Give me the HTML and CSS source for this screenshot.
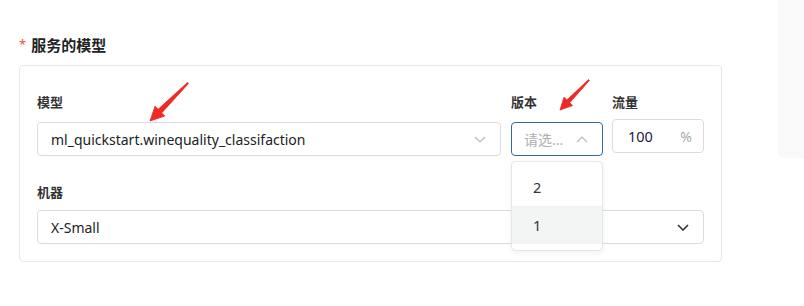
FILE: index.html
```html
<!DOCTYPE html>
<html lang="zh-CN">
<head>
    <meta charset="UTF-8">
    <meta name="viewport" content="width=device-width, initial-scale=1.0">
    <title>服务的模型</title>
    <link rel="stylesheet" href="styles.css">
</head>
<body>

    <div class="page">
        <div class="main">
            <!-- セクション見出し -->
            <div class="section-title"><span class="required">*</span>服务的模型</div>

            <div class="model-card">
                <div class="field-row">
                    <div class="field field-model">
                        <label class="field-label">模型</label>
                        <div class="select">
                            <span class="select-value">ml_quickstart.winequality_classifaction</span>
                            <svg class="chevron chevron-light" width="12" height="7" viewBox="0 0 12 7"><path d="M1 1l5 5 5-5" fill="none" stroke="currentColor" stroke-width="1.2"/></svg>
                        </div>
                    </div>

                    <div class="field field-version">
                        <label class="field-label">版本</label>
                        <div class="select select-open">
                            <span class="select-placeholder">请选...</span>
                            <svg class="chevron chevron-light" width="12" height="7" viewBox="0 0 12 7"><path d="M1 6l5-5 5 5" fill="none" stroke="currentColor" stroke-width="1.2"/></svg>
                        </div>
                        <!-- 展開中のドロップダウン -->
                        <ul class="dropdown">
                            <li class="dropdown-item">2</li>
                            <li class="dropdown-item is-hover">1</li>
                        </ul>
                    </div>

                    <div class="field field-traffic">
                        <label class="field-label">流量</label>
                        <div class="number-input">
                            <span class="number-value">100</span>
                            <span class="unit">%</span>
                        </div>
                    </div>
                </div>

                <div class="field field-machine">
                    <label class="field-label">机器</label>
                    <div class="select">
                        <span class="select-value">X-Small</span>
                        <svg class="chevron chevron-dark" width="12" height="7" viewBox="0 0 12 7"><path d="M1 1l5 5 5-5" fill="none" stroke="currentColor" stroke-width="1.6"/></svg>
                    </div>
                </div>
            </div>
        </div>

        <div class="side-panel"></div>
    </div>

    <!-- 注釈の赤い矢印 -->
    <svg class="annotation-arrow arrow-model" width="44" height="42" viewBox="0 0 44 42">
        <path d="M39.5 1.5 L40.5 2.5 L13.7 31.9 L16.8 35 L2 40 L7 25.2 L10.1 28.3 Z" fill="#ee2a24" stroke="#ee2a24" stroke-width="0.8" stroke-linejoin="round"/>
    </svg>
    <svg class="annotation-arrow arrow-version" width="34" height="34" viewBox="0 0 34 34">
        <path d="M30.6 1.6 L31.4 2.4 L11.7 24.8 L14.6 27.6 L2 32 L6 19.2 L8.9 22 Z" fill="#ee2a24" stroke="#ee2a24" stroke-width="0.8" stroke-linejoin="round"/>
    </svg>

</body>
</html>
```

FILE: styles.css
```css
/* 基本スタイル */
body {
    margin: 0;
    font-family: "Noto Sans", "Noto Sans CJK SC", sans-serif;
    background-color: #fff;
    color: #333;
}

.page {
    display: flex;
    align-items: flex-start;
    height: 306px;
    overflow: hidden;
}

.main {
    flex: 1;
    padding: 33px 0 0 19px;
}

/* 右側のパネル */
.side-panel {
    width: 26px;
    height: 158px;
    background-color: #f9f9f9;
    border-bottom-left-radius: 6px;
}

/* --- 見出し --- */
.section-title {
    font-size: 15px;
    font-weight: bold;
    line-height: 22px;
    color: #222;
    margin-bottom: 9px;
}

.section-title .required {
    color: #e5534b;
    font-weight: normal;
    font-size: 13px;
    margin-right: 5px;
    vertical-align: 2px;
}

/* --- カード --- */
.model-card {
    width: 667px;
    border: 1px solid #e8e8e8;
    border-radius: 4px;
    padding: 26px 17px 17px 17px;
}

.field-row {
    display: flex;
}

.field {
    position: relative;
}

.field-model {
    flex: 1;
}

.field-version {
    width: 92px;
    margin-left: 10px;
}

.field-traffic {
    width: 92px;
    margin-left: 9px;
}

.field-machine {
    margin-top: 26px;
}

.field-label {
    display: block;
    font-size: 13px;
    font-weight: bold;
    line-height: 20px;
    margin-bottom: 10px;
    color: #333;
}

.field-machine .field-label {
    margin-bottom: 8px;
}

.field-traffic .field-label {
    margin-bottom: 7px;
}

/* セレクトボックス */
.select {
    display: flex;
    align-items: center;
    justify-content: space-between;
    box-sizing: border-box;
    height: 34px;
    padding: 0 14px 0 13px;
    border: 1px solid #dcdcdc;
    border-radius: 4px;
    background-color: #fff;
}

.select-value {
    font-size: 14px;
    color: #222;
    white-space: nowrap;
}

.select-open {
    border-color: #2f6aa3;
    padding-right: 14px;
    padding-left: 12px;
}

.select-placeholder {
    font-size: 14px;
    color: #b0b0b0;
}

.chevron-light {
    color: #b8b8b8;
}

.chevron-dark {
    color: #333;
}

/* ドロップダウン */
.dropdown {
    position: absolute;
    top: 69px;
    left: 0;
    width: 92px;
    box-sizing: border-box;
    margin: 0;
    padding: 6px 0;
    list-style: none;
    background-color: #fff;
    border: 1px solid #e6e6e6;
    border-radius: 4px;
    box-shadow: 0 2px 6px rgba(0, 0, 0, 0.06);
    z-index: 10;
}

.dropdown-item {
    height: 38px;
    line-height: 38px;
    padding-left: 21px;
    font-size: 14.5px;
    color: #333;
}

.dropdown-item.is-hover {
    background-color: #f3f4f4;
}

/* 数値入力 */
.number-input {
    display: flex;
    align-items: center;
    justify-content: space-between;
    box-sizing: border-box;
    height: 34px;
    padding: 0 11px 0 15px;
    border: 1px solid #dcdcdc;
    border-radius: 4px;
}

.number-value {
    font-size: 14.5px;
    color: #1f2040;
}

.unit {
    font-size: 14px;
    color: #aaa;
}

/* 注釈の矢印 */
.annotation-arrow {
    position: absolute;
    z-index: 20;
}

.arrow-model {
    left: 148px;
    top: 81px;
}

.arrow-version {
    left: 558px;
    top: 78px;
}
```
